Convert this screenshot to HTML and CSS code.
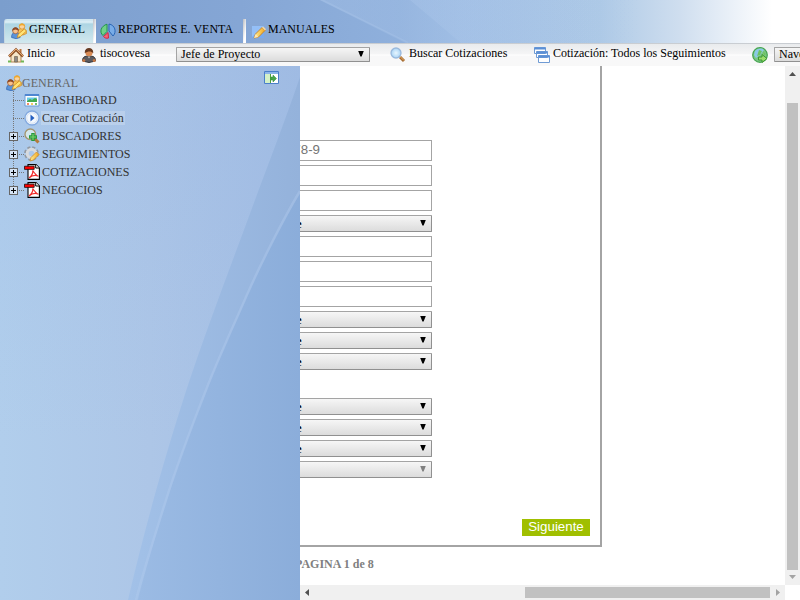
FILE: index.html
```html
<!DOCTYPE html>
<html lang="es">
<head>
<meta charset="utf-8">
<title>Cotizaciones</title>
<link rel="stylesheet" href="styles.css">
</head>
<body>
<svg class="defs" width="0" height="0">
  <defs>
    <linearGradient id="sky" x1="0" x2="1"><stop offset="0" stop-color="#b1ceec"/><stop offset=".5" stop-color="#adc6e7"/><stop offset="1" stop-color="#a3bde3"/></linearGradient>
    <linearGradient id="shade" x1="0" y1="1" x2="0" y2="0"><stop offset="0.3" stop-color="#8fb2e4" stop-opacity="0"/><stop offset="1" stop-color="#8fb2e4" stop-opacity=".2"/></linearGradient>
    <linearGradient id="band" x1="0" x2="1"><stop offset="0" stop-color="#a2c1e8"/><stop offset="1" stop-color="#94b2db"/></linearGradient>
    <linearGradient id="deep" x1="0" x2="1"><stop offset="0" stop-color="#9bbbe4"/><stop offset="1" stop-color="#8badda"/></linearGradient>
    <linearGradient id="gold" x1="0" x2="1"><stop offset="0" stop-color="#fff29a"/><stop offset="1" stop-color="#f2a51e"/></linearGradient>
    <linearGradient id="veil" x1="0" x2="1"><stop offset="0" stop-color="#b0caec" stop-opacity=".3"/><stop offset="1" stop-color="#b0caec" stop-opacity="0"/></linearGradient>
    <radialGradient id="glass"><stop offset="0" stop-color="#e8f6ff"/><stop offset="1" stop-color="#a9d4f5"/></radialGradient>
    <linearGradient id="top" x1="0" x2="1"><stop offset="0" stop-color="#7b9ecd"/><stop offset=".3" stop-color="#85a6d5"/><stop offset=".5" stop-color="#8fb0dc"/><stop offset=".58" stop-color="#9dbce3"/><stop offset=".75" stop-color="#adc9e6"/><stop offset=".85" stop-color="#cfdeef"/><stop offset=".965" stop-color="#fff"/></linearGradient>
    <symbol id="people" viewBox="0 0 16 16">
      <path d="M6.500 10c0-3.500 2-4.500 4.500-4.500s4.500 1 4.500 5L12 12z" fill="#f7c659" stroke="#cc8420" stroke-width=".7"/>
      <circle cx="11" cy="3.500" r="2.700" fill="#fbd39e" stroke="#d7922c" stroke-width=".8"/><path d="M8 3.500C7.700-.5 14.300-.5 14 3.500c-2-1.600-4-1.500-6 0" fill="#f0a92a"/>
      <path d="M.6 14.500c0-3.500 1-5 4-5s4.500 1.500 4.500 5l-4 1.200z" fill="#5c94d8" stroke="#2c62ad" stroke-width=".7"/>
      <circle cx="4.500" cy="7.800" r="2.900" fill="#f8c18d" stroke="#9b5930" stroke-width=".7"/><path d="M1.300 8c-.5-5 7-5 6.400 0-2-2-4.400-2-6.400 0" fill="#8e4a26"/>
      <path d="m6.300 14.500 1-3.500 6-5L15.500 8l-6 5.500z" fill="#ffe375" stroke="#d28a1a" stroke-width=".8"/>
    </symbol>
    <symbol id="pdf" viewBox="0 0 16 16"><path d="M4 .6h8l3.400 3.400v11.400H4z" fill="#fff" stroke="#000" stroke-width="1.100"/><path d="M11.700.5V4h3.700" fill="#fff" stroke="#000"/><path d="M.5 2.200h9.700v3.200H.5z" fill="#f00" stroke="#000" stroke-width=".7"/><path d="M5 14c3-2.500 4.200-5 3.700-7.500C11 10 12 11.500 14.500 12.300 11 10.500 8 11.500 5 14z" fill="none" stroke="#f02a2a" stroke-width="1.100"/></symbol>
  </defs>
</svg>

<header class="header">
  <svg class="fill" viewBox="0 0 800 43" preserveAspectRatio="none"><path d="M0 0h800v43H0z" fill="url(#top)"/><path d="M320 0 408 43H640V0z" fill="url(#veil)"/><path d="m410 0 51 43h179V0z" fill="url(#veil)"/><path d="m318-2 90 45" stroke="#b5cff0" stroke-width="2" opacity=".25"/></svg>
  <nav class="tabs">
    <div class="tab active"><svg class="i16"><use href="#people"/></svg><span>GENERAL</span></div>
    <div class="tab reports"><svg class="i16" viewBox="0 0 16 16"><path d="M7 1.200v7.300L3 12.500C-1 9 1 3 7 1.200z" fill="#6fd088" stroke="#249548"/><path d="M9 1c6 1 8 8 4 12L9 8z" fill="#78ace8" stroke="#2865b5"/><path d="m8 9.500.5 5.500c-2 .6-4 0-5-1.500z" fill="#f36777" stroke="#d52540"/></svg><span>REPORTES E. VENTA</span></div>
    <div class="tab manuals"><svg class="i16" viewBox="0 0 16 16"><path d="M1 2h12v12H1z" fill="#78aaf0"/><path d="M1 2h12L1 13z" fill="#94bff7"/><path d="m3 14 1.500-4L11 3.500l3 3L7.500 13z" fill="url(#gold)" stroke="#c98321" stroke-width=".9"/><path d="m3 14 1.500-4 3 3z" fill="#ffe8b5"/><path d="m11 3.500 1.200-1 2.800 2.800-1 1.200z" fill="#f6d7a0"/></svg><span>MANUALES</span></div>
  </nav>
</header>

<div class="toolbar">
  <div class="tool home"><svg class="i16" viewBox="0 0 16 16"><path d="M3 8l5-4.500L13 8v7H3z" fill="#f5e6c8" stroke="#b28653"/><path d="M11.500 2h2v4h-2z" fill="#b9753f"/><path d="M6.500 9.500h3V15h-3z" fill="#8c8a86" stroke="#6f5a42" stroke-width=".6"/><path d="m1 9.500 7-7 7 7" fill="none" stroke="#93582f" stroke-width="2.600"/><path d="m1 9 7-7 7 7" fill="none" stroke="#e5ab70" stroke-width="1"/><path d="M0 14.500h3m10 0h3" stroke="#72b755" stroke-width="2"/></svg><span>Inicio</span></div>
  <div class="tool user"><svg class="i16" viewBox="0 0 16 16"><path d="M1.500 14c0-4 2-5 6.500-5s6.500 1 6.500 5L8 15.500z" fill="#5b5b60" stroke="#353539"/><circle cx="8" cy="5.500" r="3.700" fill="#d98b55"/><path d="M3.800 6C3-.8 13-.8 12.200 6 10 3.800 7 4 3.800 6" fill="#653921"/><path d="m6.500 9.500 1.500 2 1.500-2" fill="#bbb"/><circle cx="2.800" cy="13.500" r="1.500" fill="#c67642"/><circle cx="13.200" cy="13.500" r="1.500" fill="#c67642"/></svg><span>tisocovesa</span></div>
  <div class="select role"><span>Jefe de Proyecto</span><i class="arrow"></i></div>
  <div class="tool search"><svg class="i16" viewBox="0 0 16 16"><path d="m10 10 4 4" stroke="#a56b32" stroke-width="3"/><path d="m10 9.500 4 4" stroke="#e9b168"/><circle cx="6" cy="6" r="5" fill="url(#glass)" stroke="#9ab9dd" stroke-width="1.300"/></svg><span>Buscar Cotizaciones</span></div>
  <div class="tool track"><svg class="i16" viewBox="0 0 16 16"><g fill="#fff" stroke="#6f9bd4"><path d="M.5.500h11v6H.5zM2.500 4.500h11v6h-11zM4.500 8.500h11v7h-11z"/></g><path d="M.5.500h11v2H.5zM2.500 4.500h11v2h-11zM4.500 8.500h11v2h-11z" fill="#5b8fd6"/></svg><span>Cotización: Todos los Seguimientos</span></div>
  <div class="tool web"><svg class="i16" viewBox="0 0 16 16"><circle cx="8" cy="8" r="7.300" fill="#7cc684" stroke="#45a550" stroke-width="1.200"/><path d="M3 4c3-3 7-3 9-1l-4 5-4 3-2-3z" fill="#8bc9e7"/><path d="m7 3 3 1-2 4-3 1M11 4l3 3-2 2z" fill="#6cc45f"/><path d="M6.500 10H10V7.500l5 4-5 4V13H6.500z" fill="#9bdc6c" stroke="#3b9833"/></svg></div>
  <div class="select browse"><span>Navegar</span></div>
</div>

<div class="main">
  <aside class="sidebar">
    <svg class="fill" viewBox="0 0 300 534" preserveAspectRatio="none">
      <path d="M0 0h300v534H0z" fill="url(#sky)"/>
      <path d="M0 0h300v534H0z" fill="url(#shade)"/>
      <path d="M300 11C285 55 270 93 255 134S222 222 200 284S150 440 128 534H300z" fill="url(#band)"/>
      <path d="M300 128C290 143 265 190 247 231S220 291 207 324S180 393 167 434S147 499 138 534H300z" fill="url(#deep)"/>
      <path d="M300 125C289 143 264 190 246 231S219 291 206 324S179 393 166 434S145 499 136 534" fill="none" stroke="#b2cbed" stroke-width="2.500" opacity=".4"/>
    </svg>
    <svg class="collapse" viewBox="0 0 15 13"><path d="M.5.500h14v12H.5z" fill="#fff" stroke="#4a7fc9"/><path d="M1 1h13v2H1z" fill="#8bb4ea"/><path d="M1 3h5v9H1z" fill="#d4f1c7"/><path d="M6.500 3v9" stroke="#50a33b"/><path d="M7 6h2V4l3.500 3.500L9 11V9H7z" fill="#4aa649" stroke="#2f8839" stroke-width=".5"/></svg>
    <div class="tree">
      <div class="root"><svg class="i16"><use href="#people"/></svg><span>GENERAL</span></div>
      <div class="node"><i class="twig"></i><svg class="i16" viewBox="0 0 16 16"><path d="M1 2.500h14v11.500H1z" fill="#fff" stroke="#6b9bd8"/><path d="M1 2h14v2H1z" fill="#4f86d1"/><path d="M3 5.500h10v4H3z" fill="#6acbe9"/><path d="m3 9 3-2 2 1 3-2 2 1v3H3z" fill="#43aa50"/><path d="M3 12h2" stroke="#e63" stroke-width="1.300"/><path d="M7 12h2" stroke="#eb3" stroke-width="1.300"/><path d="M11 12h2" stroke="#4a4" stroke-width="1.300"/></svg><span>DASHBOARD</span></div>
      <div class="node"><i class="twig"></i><svg class="i16" viewBox="0 0 16 16"><circle cx="8" cy="8" r="7" fill="#f4f8fd" stroke="#83a9df" stroke-width="1.300"/><circle cx="8" cy="8" r="5.300" fill="none" stroke="#d5e2f3"/><path d="M6.500 4.500 10.500 8l-4 3.500z" fill="#245fc0"/></svg><span class="lit">Crear Cotización</span></div>
      <div class="node"><i class="twig plus"></i><svg class="i16" viewBox="0 0 16 16"><path d="m10 10 4.500 4.500" stroke="#b37a3c" stroke-width="3"/><circle cx="6.300" cy="6.300" r="5.300" fill="#d3e7ed" stroke="#a4936b" stroke-width="1.300"/><path d="M9 5v8M5 9h8" stroke="#26983d" stroke-width="3.500"/><path d="M9 6v6M6 9h6" stroke="#7bd36c" stroke-width="1.200"/></svg><span>BUSCADORES</span></div>
      <div class="node"><i class="twig plus"></i><svg class="i16" viewBox="0 0 16 16"><circle cx="7.500" cy="7.500" r="6.300" fill="none" stroke="#929aa4" stroke-width="2.200" stroke-dasharray="3 1.950"/><circle cx="7.500" cy="7.500" r="4.300" fill="none" stroke="#d7dade" stroke-width="3"/><path d="m6 15 1-3.500L12.500 6 15 8.500 9.500 14z" fill="url(#gold)" stroke="#cf8c25" stroke-width=".8"/></svg><span>SEGUIMIENTOS</span></div>
      <div class="node"><i class="twig plus"></i><svg class="i16"><use href="#pdf"/></svg><span>COTIZACIONES</span></div>
      <div class="node last"><i class="twig plus"></i><svg class="i16"><use href="#pdf"/></svg><span>NEGOCIOS</span></div>
    </div>
  </aside>

  <section class="view">
    <div class="content">
      <div class="panel">
        <div class="fields">
          <div class="input"><span>12.345.678-9</span></div>
          <div class="input"></div>
          <div class="input"></div>
          <div class="select"><span>Seleccione</span><i class="arrow"></i></div>
          <div class="input"></div>
          <div class="input"></div>
          <div class="input"></div>
          <div class="select"><span>Seleccione</span><i class="arrow"></i></div>
          <div class="select"><span>Seleccione</span><i class="arrow"></i></div>
          <div class="select"><span>Seleccione</span><i class="arrow"></i></div>
          <div class="select spaced"><span>Seleccione</span><i class="arrow"></i></div>
          <div class="select"><span>Seleccione</span><i class="arrow"></i></div>
          <div class="select"><span>Seleccione</span><i class="arrow"></i></div>
          <div class="select disabled"><span></span><i class="arrow"></i></div>
        </div>
        <div class="next">Siguiente</div>
      </div>
      <div class="page">PAGINA 1 de 8</div>
    </div>
    <div class="vbar"><svg viewBox="0 0 15 15"><path d="m4 10 3.500-4L11 10z" fill="#505050"/></svg><div class="thumb"></div><svg viewBox="0 0 15 15"><path d="m4 5 3.500 4L11 5z" fill="#a3a3a3"/></svg></div>
    <div class="hbar"><svg viewBox="0 0 15 15"><path d="M9 4 5 7.500 9 11z" fill="#505050"/></svg><div class="thumb"></div><svg viewBox="0 0 15 15"><path d="m6 4 4 3.500L6 11z" fill="#a3a3a3"/></svg></div>
  </section>
</div>
</body>
</html>
```
FILE: styles.css
```css
* { box-sizing: border-box; }
body { margin: 0; width: 800px; height: 600px; overflow: hidden; background: #fff; font: 12px/14px "Liberation Serif", serif; color: #000; }
.defs { position: absolute; }
.i16 { width: 16px; height: 16px; flex: none; display: block; }
.fill { position: absolute; inset: 0; width: 100%; height: 100%; }

.header { position: relative; height: 43px; }
.tabs { position: relative; display: flex; height: 43px; padding: 19px 0 0 4px; }
.tab { display: flex; align-items: flex-start; height: 24px; padding: 3px 0 0 7px; white-space: nowrap; background: linear-gradient(100deg, #b9bcc2, #fff 70%) right / 3px 100% no-repeat; }
.tab svg { margin: 1px 2px 0 0; }
.tab.active { width: 92px; background: linear-gradient(100deg, #b9bcc2, #fff 70%) right / 3px 100% no-repeat, linear-gradient(#cfe6f1 0 2px, #e2f2f8 3px, #add5e3 5px, #d2e8ee); border-left: 1px solid #c5d6e2; padding-left: 6px; border-top-left-radius: 3px; }
.tab.reports { width: 150px; padding-left: 4px; }
.tab.manuals { background: none; padding-left: 5px; }
.tab.manuals svg { margin-top: 2px; margin-right: 1px; }

.toolbar { display: flex; height: 23px; border-top: 1px solid #c9cdd2; background: linear-gradient(#e9ebed, #f5f5f6 10px, #fff 11px, #f8f8f9 12px, #f8f8f8); overflow: hidden; white-space: nowrap; }
.tool { display: flex; flex: none; padding-top: 3px; }
.tool span { line-height: 13px; }
.home { width: 73px; padding-left: 8px; gap: 3px; }
.user { width: 103px; padding-left: 8px; gap: 3px; }
.search { width: 144px; padding-left: 20px; gap: 3px; }
.track { width: 238px; padding-left: 20px; gap: 3px; }
.web { width: 22px; }

.select { display: flex; align-items: center; justify-content: space-between; flex: none; height: 17px; padding: 0 5px 0 4px; border: 1px solid #a4a4a4; border-bottom-color: #909090; border-right-color: #909090; border-radius: 1px; background: linear-gradient(#f6f6f6, #dcdcdc); }
.arrow { width: 6px; height: 6px; background: #000; clip-path: polygon(0 0, 100% 0, 60% 100%, 40% 100%); position: relative; top: -1px; }
.toolbar .select { height: 15px; margin-top: 3px; line-height: 12px; }
.toolbar .select span { position: relative; top: -1px; }
.role { width: 194px; }
.toolbar .browse { width: 60px; }

.main { display: flex; height: 534px; }
.sidebar { position: relative; width: 300px; flex: none; }
.collapse { position: absolute; left: 264px; top: 5px; width: 15px; height: 13px; }
.tree { position: relative; padding: 9px 0 0 6px; color: #333; }
.root { display: flex; height: 16px; color: #666; line-height: 16px; }
.node { display: flex; align-items: center; height: 18px; }
.node svg { margin-right: 1px; }
.node span { line-height: 14px; padding: 0 1px; }
.lit { background: rgba(255, 255, 255, .2); }
.twig { position: relative; width: 18px; height: 18px; flex: none; background: repeating-linear-gradient(90deg, #777 0 1px, transparent 1px 2px) 7px 9px / 11px 1px no-repeat, repeating-linear-gradient(#777 0 1px, transparent 1px 2px) 7px 0 / 1px 18px no-repeat; }
.last .twig { background-size: 11px 1px, 1px 9px; }
.plus::after { content: ""; position: absolute; left: 3px; top: 5px; width: 9px; height: 9px; box-sizing: border-box; border: 1px solid #666; background: linear-gradient(#000, #000) 1px 3px / 5px 1px no-repeat, linear-gradient(#000, #000) 3px 1px / 1px 5px no-repeat, #d5e3f4; }

.view { display: grid; grid-template: 519px 15px / 485px 15px; width: 500px; }
.content { overflow: hidden; }
.panel { width: 302px; height: 481px; border: solid #a4a4a4; border-width: 0 2px 2px 0; }
.fields { display: flex; flex-direction: column; gap: 4px; width: 200px; margin-left: -68px; padding-top: 74px; }
.input { height: 21px; border: 1px solid #a4a4a4; padding-right: 111px; text-align: right; font: 13.333px/18px "Liberation Sans", sans-serif; color: #757575; }
.fields .select { padding-left: 16px; font-weight: bold; }
.disabled .arrow { background: #808080; }
.fields .spaced { margin-top: 24px; }
.next { width: 68px; height: 17px; margin: 41px 0 0 222px; background: #a0bf00; color: #fff; text-align: center; font: 13.333px/16px "Liberation Sans", sans-serif; }
.page { margin: 10px 0 0 -5px; font-weight: bold; color: #808080; }
.vbar, .hbar { display: flex; background: #f0f0f0; }
.vbar { flex-direction: column; }
.vbar svg, .hbar svg { width: 15px; height: 15px; flex: none; }
.thumb { background: #c1c1c1; }
.vbar .thumb { width: 11px; height: 467px; margin: 22px 2px 0; }
.hbar .thumb { width: 245px; height: 11px; margin: 2px 0 0 210px; }
```
